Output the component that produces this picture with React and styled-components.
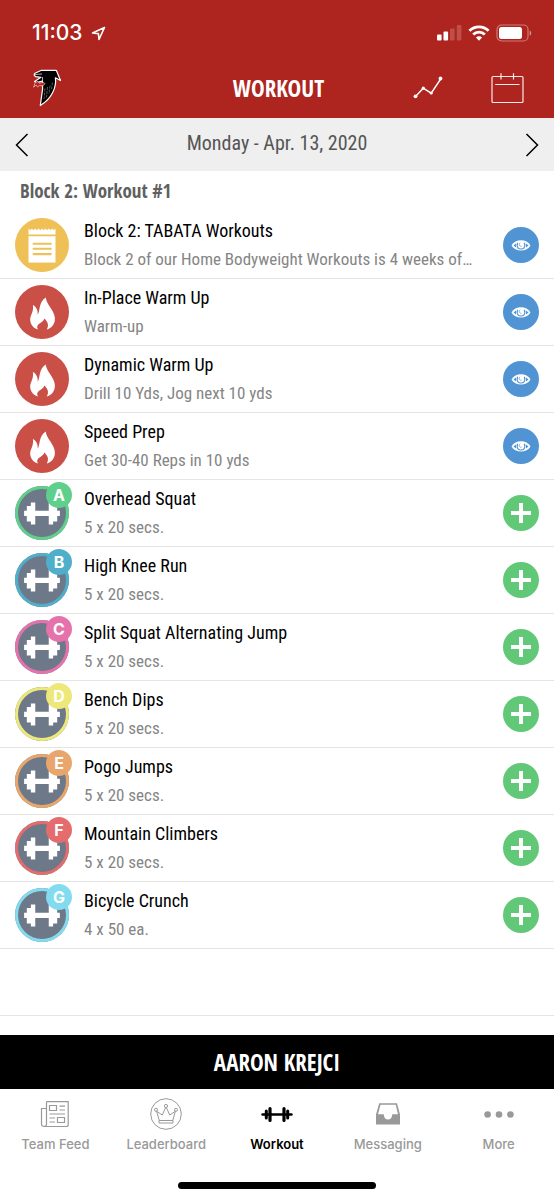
import React from "react";
import styled, { createGlobalStyle } from "styled-components";

const condensed = `"Roboto Condensed", "Noto Sans CJK SC", sans-serif`;
const heading = `"Open Sans Condensed", ${condensed}`;
const ui = `Inter, "Liberation Sans", sans-serif`;

const GlobalStyle = createGlobalStyle`
  *, *::before, *::after { box-sizing: border-box; }
  body { margin: 0; background: #fff; font-family: ${condensed}; color: #000; }
  button { border: 0; padding: 0; background: none; color: inherit; font: inherit; cursor: pointer; }
  svg { display: block; flex: none; }
`;

const Screen = styled.div`
  display: flex;
  flex-direction: column;
  min-height: 100vh;
`;

const Header = styled.header`
  background: #ae241e;
  color: #fff;
`;

const StatusBar = styled.div`
  display: flex;
  align-items: center;
  justify-content: space-between;
  height: 58px;
  padding: 8px 22px 0 32px;
`;

const StatusGroup = styled.div`
  display: flex;
  align-items: center;
  gap: 6px;
`;

const Clock = styled.time`
  margin-right: 2px;
  font: 500 21px/24px ${ui};
`;

const NavBar = styled.div`
  display: grid;
  grid-template-columns: 1fr auto 1fr;
  align-items: center;
  height: 60px;
  padding: 0 30px 0 33px;
`;

const NavTitle = styled.h1`
  margin: 0;
  font-family: ${heading};
  font-size: 23px;
  line-height: 28px;
  font-weight: 700;
`;

const NavActions = styled.div`
  display: flex;
  justify-content: flex-end;
  gap: 48px;
`;

const DateBar = styled.div`
  display: flex;
  align-items: center;
  justify-content: space-between;
  height: 53px;
  padding: 0 15px;
  background: #efefef;
`;

const DateText = styled.div`
  font-size: 20px;
  line-height: 28px;
  color: #555;
  padding-bottom: 4px;
`;

const Main = styled.main`
  flex: 1;
`;

const SectionTitle = styled.h2`
  margin: 0;
  padding: 6px 20px 7px;
  font-family: ${heading};
  font-size: 19px;
  line-height: 28px;
  font-weight: 700;
  color: #606060;
`;

const List = styled.ul`
  margin: 0;
  padding: 0;
  list-style: none;
`;

const Row = styled.li`
  display: flex;
  align-items: center;
  gap: 15px;
  height: 67px;
  padding: 0 15px;
  border-bottom: 1px solid #e4e4e4;
`;

const Avatar = styled.div`
  position: relative;
  flex: none;
  width: 54px;
  height: 54px;
  border-radius: 50%;
  background: ${(p) => p.$fill};
  box-shadow: ${(p) => (p.$ring ? `inset 0 0 0 3px ${p.$ring}` : "none")};
`;

const Badge = styled.span`
  position: absolute;
  top: -4px;
  right: -3px;
  width: 26px;
  height: 26px;
  border-radius: 50%;
  background: ${(p) => p.$fill};
  color: #fff;
  font: 700 16px/26px ${ui};
  text-align: center;
`;

const RowText = styled.div`
  flex: 1;
  min-width: 0;
  padding-bottom: 1px;
`;

const RowTitle = styled.div`
  font-size: 18px;
  line-height: 29px;
  white-space: nowrap;
`;

const RowNote = styled(RowTitle)`
  font-size: 17px;
  color: #858585;
`;

const RoundButton = styled.button`
  flex: none;
  width: 36px;
  height: 36px;
  border-radius: 50%;
  background: ${(p) => p.$fill};
`;

const AthleteButton = styled.button`
  height: 54px;
  background: #000;
  color: #fff;
  font-family: ${heading};
  font-size: 23px;
  line-height: 28px;
  font-weight: 700;
`;

const Footer = styled.footer`
  display: flex;
  flex-direction: column;
  align-items: center;
  gap: 29px;
  padding: 9px 0 11px;
`;

const TabBar = styled.nav`
  display: grid;
  grid-template-columns: repeat(5, 1fr);
  width: 100%;
`;

const Tab = styled.a`
  display: flex;
  flex-direction: column;
  align-items: center;
  gap: 5px;
  font: ${(p) => (p.$active ? 600 : 500)} 13px/18px ${ui};
  color: ${(p) => (p.$active ? "#000" : "#999")};
  text-decoration: none;
`;

const HomeIndicator = styled.div`
  width: 198px;
  height: 7px;
  border-radius: 4px;
  background: #000;
`;

const LocationIcon = () => (
  <svg width="15" height="15" viewBox="0 0 15 15" fill="none" stroke="#fff" strokeWidth="1.6" strokeLinejoin="round">
    <path d="M13.5 1.5 1.5 7 7.4 7.6 8 13.5Z" />
  </svg>
);

const SignalIcon = () => (
  <svg width="25" height="16" viewBox="0 0 25 16" fill="#fff">
    <rect x="0" y="9.5" width="4.6" height="6" rx="1" />
    <rect x="6.5" y="6.5" width="4.6" height="9" rx="1" />
    <rect x="13" y="3.5" width="4.6" height="12" rx="1" opacity=".2" />
    <rect x="19.8" y="0" width="4.6" height="15.5" rx="1" opacity=".2" />
  </svg>
);

const WifiIcon = () => (
  <svg width="22" height="16" viewBox="0 0 22 16" fill="none" stroke="#fff" strokeWidth="2.8">
    <path d="M1.4 5.8a13.6 13.6 0 0 1 19.2 0" />
    <path d="M5.2 9.6a8.2 8.2 0 0 1 11.6 0" />
    <path d="M11 15.8 7.9 12.6a4.4 4.4 0 0 1 6.2 0Z" fill="#fff" stroke="none" />
  </svg>
);

const BatteryIcon = () => (
  <svg width="36" height="18" viewBox="0 0 36 18">
    <rect x="1" y="1" width="31" height="16" rx="4.5" fill="none" stroke="#fff" strokeOpacity=".4" strokeWidth="1.2" />
    <rect x="3" y="3" width="23" height="12" rx="2.5" fill="#fff" />
    <path d="M33.7 6.4c2 .8 2 4.4 0 5.2Z" fill="#fff" fillOpacity=".5" />
  </svg>
);

const FalconLogo = () => (
  <svg width="29" height="38" viewBox="0 0 29 38" role="img" aria-label="Falcons">
    <path
      d="M1.5 4.5 8.5 1.3H23.3L27.5 11.5 22.4 8.8C23.6 18 19 29.5 7.3 36.5L8.6 27 9.6 20 9.4 12 3.5 13.6 1.5 12.5 8 8.3 2.5 7.6 1.2 6Z"
      fill="#000" stroke="#fff" strokeWidth="1.2" strokeLinejoin="round"
    />
    <path d="M2 5.5 9 5M9.5 12.5V8" stroke="#fff" strokeWidth=".7" fill="none" />
    <path d="M.6 18.2 2.2 13.4 5 12.5 6.3 14.3 10.5 13.2 12 14.7 10 16.8 6.6 16.5 4.5 18 3.2 16Z" fill="#b62620" stroke="#f2c7c4" strokeWidth=".7" />
    <path d="M12 19.5 11 30M14.5 18 13.5 28.5M17 16.5 16 25M19.5 13.5 18.5 20.5" stroke="#aaa" strokeWidth=".5" strokeDasharray="3 1" />
  </svg>
);

const ChartIcon = () => (
  <svg width="30" height="30" viewBox="0 0 30 30" fill="#fff">
    <path d="M2.5 23.5 10.3 15.2 18.2 20.2 28 5.5" fill="none" stroke="#fff" strokeWidth="1.4" />
    <circle cx="2.5" cy="23.3" r="1.9" />
    <circle cx="10.3" cy="15.2" r="1.6" />
    <circle cx="18.2" cy="20" r="1.6" />
    <circle cx="27.5" cy="5.5" r="1.9" />
  </svg>
);

const CalendarIcon = () => (
  <svg width="33" height="32" viewBox="0 0 33 32" fill="none" stroke="#fff" strokeOpacity=".9" strokeWidth="1.2">
    <rect x="1" y="4.5" width="31" height="26" rx="1" />
    <path d="M10 1.2V7.5M22.5 1.2V7.5M4.2 12.5H28.5" />
  </svg>
);

const Chevron = ({ flip }) => (
  <svg width="14" height="24" viewBox="0 0 14 24" fill="none" stroke="#000" strokeWidth="1.5">
    <path d={flip ? "M1.5 1 12.5 12 1.5 23" : "M12.5 1 1.5 12 12.5 23"} />
  </svg>
);

const NoteGlyph = () => (
  <svg width="54" height="54" viewBox="0 0 160 160">
    <path d="M40 31 45 36 50 31 55 36 60 31 65 36 70 31 75 36 80 31 85 36 90 31 95 36 100 31 105 36 110 31 115 36 120 31V49H40Z" fill="#fff" />
    <path d="M40 54H120V132H40Z" fill="#fff" />
    <path d="M55 76H106M55 91H106M55 107H106" stroke="#efc055" strokeWidth="6" strokeLinecap="round" />
  </svg>
);

const FlameGlyph = () => (
  <svg width="54" height="54" viewBox="0 0 160 160">
    <path
      d="M91 37C93 58 116 74 118 96C120 115 108 128 94 132C101 119 98 110 87 99C85 109 70 112 66 122C65 126 67 130 69 132C55 129 45 116 45 102C45 88 56 80 53 59C64 65 69 76 67 88C75 79 69 51 91 37Z"
      fill="#fff"
    />
  </svg>
);

const DumbbellGlyph = () => (
  <svg width="54" height="54" viewBox="0 0 160 160">
    <path
      d="M27 73H35V59H47V49H60V73H100V49H113V59H125V73H133V89H125V105H113V114H100V89H60V114H47V105H35V89H27Z"
      fill="#fff"
    />
  </svg>
);

const EyeGlyph = () => (
  <svg width="36" height="36" viewBox="0 0 36 36">
    <path d="M8.5 18.5C12 11.5 24 11.5 27.5 18.5C24 25.2 12 25.2 8.5 18.5Z" fill="#fff" />
    <path d="M14.6 15.8C13 21 16 22 18 22S23 21 21.4 15.8" fill="none" stroke="#5094d3" strokeWidth="1.2" />
    <path d="M17 15.7C15.5 17.5 16.5 19.5 18.5 19.3" fill="none" stroke="#5094d3" strokeWidth=".7" />
    <path d="M13 16.5V20.5L10.5 18.5ZM23 16.5V20.5L25.5 18.5Z" fill="#5094d3" />
  </svg>
);

const PlusGlyph = () => (
  <svg width="36" height="36" viewBox="0 0 36 36">
    <path d="M18 8V28M8 18H28" stroke="#fff" strokeWidth="4" />
  </svg>
);

const NewsIcon = () => (
  <svg width="32" height="32" viewBox="0 0 32 32" fill="none" stroke="currentColor" strokeWidth="1.2">
    <path d="M7.5 3.7H29.2V26.5Q29.2 28.5 27.2 28.5H5Q2.5 28.5 2.5 26V10.5H7.5M7.5 3.7V26Q7.5 28.5 5 28.5" />
    <path d="M10.5 7.5H17.5V12.5H10.5ZM18.5 19.5H25.5V24.5H18.5ZM20.5 8.2H26M20.5 12H26M10.5 16H26M10.5 20H16M10.5 24H16" />
  </svg>
);

const CrownIcon = () => (
  <svg width="32" height="32" viewBox="0 0 32 32" fill="none" stroke="currentColor" strokeWidth="1">
    <circle cx="16" cy="16" r="15.3" />
    <circle cx="16" cy="8" r="1.6" />
    <circle cx="6" cy="11.8" r="1.5" />
    <circle cx="26" cy="11.8" r="1.5" />
    <path d="M9.3 22.5 6.6 13.3 12.3 17 15.6 9.6H16.4L19.7 17 25.4 13.3 22.7 22.5M9 25V22.5H23V25Z" />
  </svg>
);

const WorkoutIcon = () => (
  <svg width="32" height="32" viewBox="0 0 32 32" stroke="#000" strokeLinecap="round">
    <path d="M1.5 16.5H30.5" strokeWidth="2.4" />
    <path d="M5.3 13V20M26.7 13V20" strokeWidth="3" />
    <path d="M9 10.5V22.5M23 10.5V22.5" strokeWidth="3.2" />
  </svg>
);

const InboxIcon = () => (
  <svg width="32" height="32" viewBox="0 0 32 32" fill="currentColor">
    <path d="M7.2 5.3H25L28 16.5V26.5H4V16.5ZM8.5 6.8 6 16.3H11.7Q12.2 21.5 16 21.5T20.3 16.3H26L23.7 6.8Z" fillRule="evenodd" />
  </svg>
);

const DotsIcon = () => (
  <svg width="32" height="32" viewBox="0 0 32 32" fill="currentColor">
    <circle cx="4.6" cy="16.5" r="3.3" />
    <circle cx="16" cy="16.5" r="3.3" />
    <circle cx="27.4" cy="16.5" r="3.3" />
  </svg>
);

const glyphs = { note: NoteGlyph, flame: FlameGlyph, dumbbell: DumbbellGlyph };
const fills = { note: "#efc055", flame: "#c94f47", dumbbell: "#6d7888" };

const items = [
  { kind: "note", title: "Block 2: TABATA Workouts", note: "Block 2 of our Home Bodyweight Workouts is 4 weeks of…" },
  { kind: "flame", title: "In-Place Warm Up", note: "Warm-up" },
  { kind: "flame", title: "Dynamic Warm Up", note: "Drill 10 Yds, Jog next 10 yds" },
  { kind: "flame", title: "Speed Prep", note: "Get 30-40 Reps in 10 yds" },
  { kind: "dumbbell", group: "A", color: "#5fd08b", title: "Overhead Squat", note: "5 x 20 secs." },
  { kind: "dumbbell", group: "B", color: "#4fafcb", title: "High Knee Run", note: "5 x 20 secs." },
  { kind: "dumbbell", group: "C", color: "#e572ab", title: "Split Squat Alternating Jump", note: "5 x 20 secs." },
  { kind: "dumbbell", group: "D", color: "#eee87a", title: "Bench Dips", note: "5 x 20 secs." },
  { kind: "dumbbell", group: "E", color: "#e9a66c", title: "Pogo Jumps", note: "5 x 20 secs." },
  { kind: "dumbbell", group: "F", color: "#e56c6c", title: "Mountain Climbers", note: "5 x 20 secs." },
  { kind: "dumbbell", group: "G", color: "#82dcf0", title: "Bicycle Crunch", note: "4 x 50 ea." },
];

const tabs = [
  { label: "Team Feed", Icon: NewsIcon },
  { label: "Leaderboard", Icon: CrownIcon },
  { label: "Workout", Icon: WorkoutIcon, active: true },
  { label: "Messaging", Icon: InboxIcon },
  { label: "More", Icon: DotsIcon },
];

function WorkoutRow({ kind, group, color, title, note }) {
  const Glyph = glyphs[kind];
  return (
    <Row>
      <Avatar $fill={fills[kind]} $ring={color}>
        <Glyph />
        {group && <Badge $fill={color}>{group}</Badge>}
      </Avatar>
      <RowText>
        <RowTitle>{title}</RowTitle>
        <RowNote>{note}</RowNote>
      </RowText>
      <RoundButton $fill={group ? "#61c877" : "#5094d3"} aria-label={`${group ? "Log" : "View"} ${title}`}>
        {group ? <PlusGlyph /> : <EyeGlyph />}
      </RoundButton>
    </Row>
  );
}

export default function App() {
  return (
    <Screen>
      <GlobalStyle />
      <Header>
        <StatusBar>
          <StatusGroup>
            <Clock>11:03</Clock>
            <LocationIcon />
          </StatusGroup>
          <StatusGroup>
            <SignalIcon />
            <WifiIcon />
            <BatteryIcon />
          </StatusGroup>
        </StatusBar>
        <NavBar>
          <FalconLogo />
          <NavTitle>WORKOUT</NavTitle>
          <NavActions>
            <button aria-label="Progress"><ChartIcon /></button>
            <button aria-label="Calendar"><CalendarIcon /></button>
          </NavActions>
        </NavBar>
      </Header>
      <DateBar>
        <button aria-label="Previous day"><Chevron /></button>
        <DateText>Monday - Apr. 13, 2020</DateText>
        <button aria-label="Next day"><Chevron flip /></button>
      </DateBar>
      <Main>
        <SectionTitle>Block 2: Workout #1</SectionTitle>
        <List>
          {items.map((item) => (
            <WorkoutRow key={item.title} {...item} />
          ))}
          <Row aria-hidden="true" />
        </List>
      </Main>
      <AthleteButton>AARON KREJCI</AthleteButton>
      <Footer>
        <TabBar>
          {tabs.map(({ label, Icon, active }) => (
            <Tab key={label} href="#" $active={active} aria-current={active ? "page" : undefined}>
              <Icon />
              {label}
            </Tab>
          ))}
        </TabBar>
        <HomeIndicator />
      </Footer>
    </Screen>
  );
}
